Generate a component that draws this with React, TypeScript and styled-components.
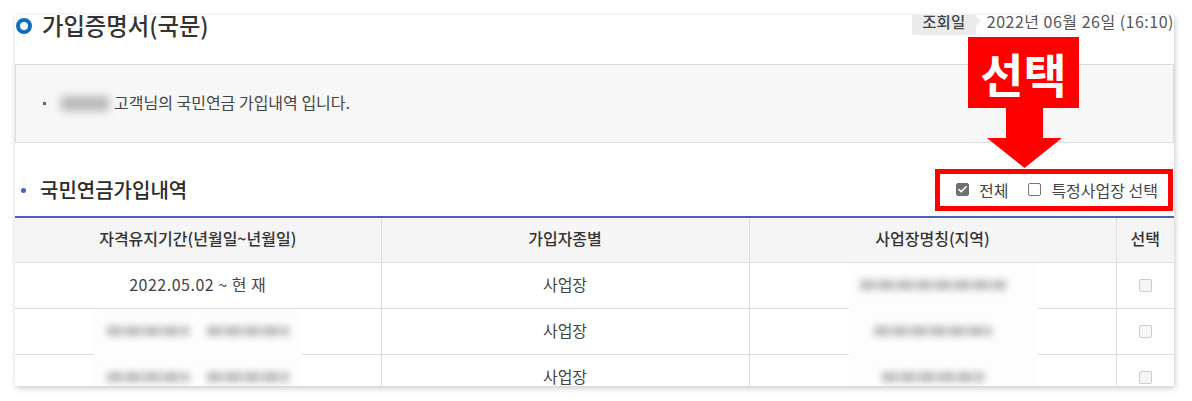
import styled, { createGlobalStyle } from 'styled-components';
import { Check } from 'lucide-react';

const GlobalStyle = createGlobalStyle`
  html, body {
    margin: 0;
    padding: 0;
    background: #fff;
    font-family: "Noto Sans CJK KR", "Noto Sans", sans-serif;
    color: #333;
  }
`;

const Stage = styled.div`
  position: relative;
  width: 1192px;
  height: 401px;
  padding: 15px 18px 0 15px;
  box-sizing: border-box;
  overflow: hidden;
`;

const Card = styled.div`
  height: 371px;
  background: #fff;
  overflow: hidden;
  box-shadow: 1px 2px 6px rgba(0, 0, 0, 0.22);
`;

const TitleRow = styled.div`
  display: flex;
  justify-content: space-between;
  align-items: flex-start;
  height: 49px;
`;

const PageTitle = styled.h1`
  display: flex;
  align-items: center;
  gap: 10px;
  margin: 0;
  padding-left: 1px;
  font-size: 23.3px;
  line-height: 18px;
  font-weight: 500;
  color: #333;
`;

const Ring = styled.span`
  width: 16px;
  height: 16px;
  margin-top: 3px;
  box-sizing: border-box;
  border: 4.5px solid #0a6fbe;
  border-radius: 50%;
  background: #fff;
`;

const DateInfo = styled.div`
  display: flex;
  align-items: flex-start;
  gap: 11px;
  font-size: 16px;
  line-height: 12px;
  letter-spacing: 0.5px;
  color: #555;
  white-space: nowrap;
`;

const DateTag = styled.span`
  position: relative;
  width: 64px;
  height: 20px;
  background: #ebebeb;
  border-radius: 0 0 2px 2px;
  font-size: 15.5px;
  line-height: 12px;
  letter-spacing: 0;
  font-weight: 500;
  text-align: center;
  color: #444;
  &::after {
    content: '';
    position: absolute;
    right: -5px;
    top: 1px;
    border-left: 5px solid #ebebeb;
    border-top: 5px solid transparent;
    border-bottom: 5px solid transparent;
  }
`;

const InfoBox = styled.div`
  display: flex;
  align-items: center;
  height: 79px;
  box-sizing: border-box;
  padding: 0 0 3px 27px;
  background: #f7f7f7;
  border: 1px solid #ddd;
  font-size: 16px;
  color: #444;
`;

const InfoBullet = styled.span`
  width: 3px;
  height: 3px;
  margin: 3px 10px 0 0;
  background: #666;
`;

const NameMask = styled.span`
  width: 48px;
  height: 15px;
  margin: 3px 5px 0 5px;
  background: #b8b8b8;
  filter: blur(4px);
`;

const SectionRow = styled.div`
  display: flex;
  justify-content: space-between;
  align-items: center;
  height: 73px;
  box-sizing: border-box;
  padding: 19px 16px 0 6px;
`;

const SectionTitle = styled.h2`
  display: flex;
  align-items: center;
  gap: 14px;
  margin: 0;
  font-size: 20px;
  font-weight: 500;
  color: #2b2b2b;
`;

const Dot = styled.span`
  width: 5px;
  height: 5px;
  margin-top: 2px;
  border-radius: 50%;
  background: #4a60b5;
`;

const Options = styled.div`
  display: flex;
  align-items: center;
  margin-top: 1px;
  font-size: 16px;
  color: #444;
`;

const Option = styled.label`
  display: flex;
  align-items: center;
  gap: 10px;
  margin-left: 20px;
`;

const Box = styled.span<{ $checked?: boolean; $muted?: boolean }>`
  display: flex;
  align-items: center;
  justify-content: center;
  width: 13px;
  height: 13px;
  box-sizing: border-box;
  border-radius: 2px;
  border: 1px solid ${(p) => (p.$checked ? '#707070' : p.$muted ? '#ccc' : '#777')};
  background: ${(p) => (p.$checked ? '#707070' : p.$muted ? '#f6f6f6' : '#fff')};
  color: #fff;
`;

const Table = styled.table`
  width: 100%;
  table-layout: fixed;
  border-collapse: collapse;
  border-top: 2px solid #4a60b5;
  font-size: 16px;
`;

const Th = styled.th`
  height: 45px;
  box-sizing: border-box;
  padding: 0 0 3px;
  background: #f5f5f5;
  border-bottom: 1px solid #ddd;
  font-weight: 500;
  color: #333;
  & + & {
    border-left: 1px solid #ddd;
  }
`;

const Td = styled.td`
  position: relative;
  height: 46px;
  box-sizing: border-box;
  padding: 0 0 2px;
  border-bottom: 1px solid #ddd;
  text-align: center;
  color: #444;
  & + & {
    border-left: 1px solid #ddd;
  }
`;

const PeriodText = styled.span`
  letter-spacing: 0.5px;
`;

const CenterBox = styled.div`
  display: flex;
  justify-content: center;
  padding-top: 2px;
`;

// white patch left by the screenshot's blur, it covers the row lines too
const BlurPatch = styled.div<{ $width: number; $shift?: number }>`
  position: absolute;
  left: 50%;
  top: 0;
  bottom: -1px;
  width: ${(p) => p.$width}px;
  margin-left: ${(p) => -p.$width / 2 + (p.$shift ?? 0)}px;
  display: flex;
  align-items: center;
  justify-content: center;
  gap: 18px;
  padding: 0 ${(p) => (p.$shift ?? 0) * 2}px 2px 0;
  box-sizing: border-box;
  background: #fdfdfd;
  z-index: 1;
`;

const BlurText = styled.span<{ $width: number }>`
  width: ${(p) => p.$width}px;
  height: 10px;
  background: repeating-linear-gradient(90deg, #bcbcbc 0 14px, #d8d8d8 14px 19px);
  filter: blur(3.5px);
`;

const Callout = styled.div`
  position: absolute;
  left: 968px;
  top: 37px;
  width: 111px;
  height: 71px;
  display: flex;
  align-items: center;
  justify-content: center;
  background: #ff0000;
  color: #fff;
  font-size: 47px;
  line-height: 1;
  font-weight: 700;
`;

const Arrow = styled.svg`
  position: absolute;
  left: 987px;
  top: 108px;
`;

const Highlight = styled.div`
  position: absolute;
  left: 935px;
  top: 169px;
  width: 238px;
  height: 42px;
  box-sizing: border-box;
  border: 5px solid #ff0000;
`;

const rows = [
  { period: '2022.05.02 ~ 현 재', place: 146 },
  { place: 118 },
  { place: 102 },
];

export default function App() {
  return (
    <Stage>
      <GlobalStyle />
      <Card>
        <TitleRow>
          <PageTitle>
            <Ring />
            가입증명서(국문)
          </PageTitle>
          <DateInfo>
            <DateTag>조회일</DateTag>
            2022년 06월 26일 (16:10)
          </DateInfo>
        </TitleRow>
        <InfoBox>
          <InfoBullet />
          <NameMask />
          고객님의 국민연금 가입내역 입니다.
        </InfoBox>
        <SectionRow>
          <SectionTitle>
            <Dot />
            국민연금가입내역
          </SectionTitle>
          <Options>
            <Option>
              <Box $checked>
                <Check size={11} strokeWidth={3.5} />
              </Box>
              전체
            </Option>
            <Option>
              <Box />
              특정사업장 선택
            </Option>
          </Options>
        </SectionRow>
        <Table>
          <colgroup>
            <col style={{ width: 366 }} />
            <col style={{ width: 368 }} />
            <col style={{ width: 367 }} />
            <col style={{ width: 58 }} />
          </colgroup>
          <thead>
            <tr>
              <Th>자격유지기간(년월일~년월일)</Th>
              <Th>가입자종별</Th>
              <Th>사업장명칭(지역)</Th>
              <Th>선택</Th>
            </tr>
          </thead>
          <tbody>
            {rows.map((row, i) => (
              <tr key={i}>
                <Td>
                  {row.period ? (
                    <PeriodText>{row.period}</PeriodText>
                  ) : (
                    <BlurPatch $width={208}>
                      <BlurText $width={82} />
                      <BlurText $width={82} />
                    </BlurPatch>
                  )}
                </Td>
                <Td>사업장</Td>
                <Td>
                  <BlurPatch $width={189} $shift={11}>
                    <BlurText $width={row.place} />
                  </BlurPatch>
                </Td>
                <Td>
                  <CenterBox>
                    <Box $muted />
                  </CenterBox>
                </Td>
              </tr>
            ))}
          </tbody>
        </Table>
      </Card>
      <Callout>선택</Callout>
      <Arrow width="75" height="60" viewBox="0 0 75 60">
        <polygon points="19,0 56,0 56,30 75,30 37.5,60 0,30 19,30" fill="#ff0000" />
      </Arrow>
      <Highlight />
    </Stage>
  );
}
